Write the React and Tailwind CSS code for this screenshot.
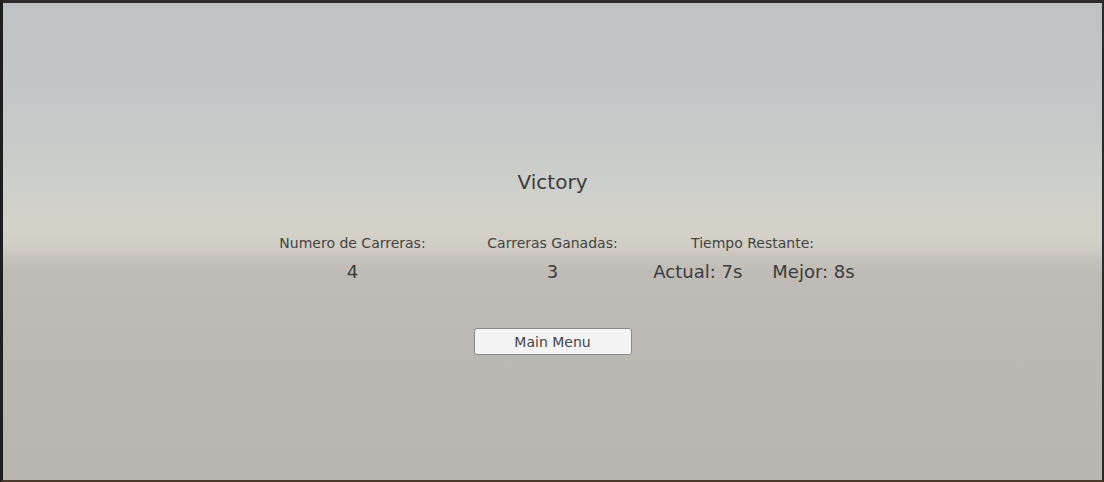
export default function App() {
  const stats = [
    { label: "Numero de Carreras:", value: "4" },
    { label: "Carreras Ganadas:", value: "3" },
  ];

  return (
    <div className="w-[1104px] h-[482px] bg-[#2b2b2b] border-t-[3px] border-t-[#2a2a2a] border-l-[3px] border-l-[#1e1e1e] border-r-[2px] border-r-[#2a2a2a] border-b-[2px] border-b-[#4a3b2b] font-['DejaVu_Sans',sans-serif]">
      <div className="h-full w-full flex flex-col items-center pt-[167px] text-[#3c3c3c] bg-[linear-gradient(to_bottom,#bec2c4_0%,#c6c8c8_25%,#cdcfcb_38%,#d3d2c8_46%,#d3d1c7_49%,#cfccc4_51.5%,#c6c2bc_53.5%,#bfbbb6_56.5%,#bcb8b3_70%,#b9b5b0_100%)]">
        <div className="text-[20px] leading-[24px]">Victory</div>

        <div className="grid grid-cols-[200px_200px_200px] mt-[39px]">
          {stats.map((s) => (
            <div key={s.label} className="flex flex-col items-center">
              <div className="text-[14px] leading-[20px] text-[#444]">{s.label}</div>
              <div className="text-[18px] leading-[24px] mt-[7px]">{s.value}</div>
            </div>
          ))}
          <div className="flex flex-col items-center">
            <div className="text-[14px] leading-[20px] text-[#444]">Tiempo Restante:</div>
            <div className="flex gap-[30px] pl-[3px] text-[18px] leading-[24px] mt-[7px] whitespace-nowrap">
              <span>Actual: 7s</span>
              <span>Mejor: 8s</span>
            </div>
          </div>
        </div>

        <button className="mt-[44px] w-[158px] h-[27px] bg-[#f4f4f4] border border-[#8a8a8a] rounded-[3px] text-[14px] leading-[20px] pt-[1px] text-[#444] flex items-center justify-center">
          Main Menu
        </button>
      </div>
    </div>
  );
}
